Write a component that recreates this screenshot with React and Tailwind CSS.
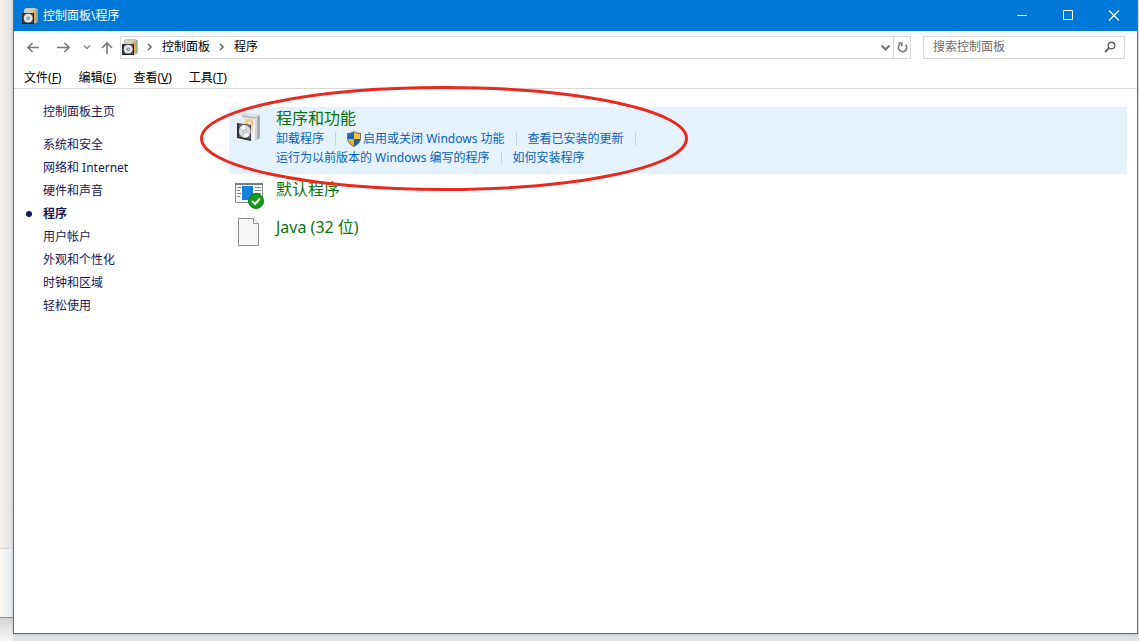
import React from 'react';

const sidebarItems = [
  { label: '系统和安全' },
  { label: '网络和 Internet' },
  { label: '硬件和声音' },
  { label: '程序', active: true },
  { label: '用户帐户' },
  { label: '外观和个性化' },
  { label: '时钟和区域' },
  { label: '轻松使用' }
];

const menuItems = [
  { label: '文件', hotkey: 'F' },
  { label: '编辑', hotkey: 'E' },
  { label: '查看', hotkey: 'V' },
  { label: '工具', hotkey: 'T' }
];

const breadcrumbs = ['控制面板', '程序'];

const ProgramsIcon = ({ className }) => (
  <svg className={className} viewBox="0 0 16 16" aria-hidden="true">
    <path d="M2 1.500 4 0h9l2.500 1v13L13 15.500 2 5z" fill="#c3c6c0" />
    <path d="M3 1h9v4H3z" fill="#d5d1bf" />
    <path d="M10.500 2.500h3V14h-3z" fill="#e3ab45" />
    <path d="M13.500 2 15.500 1v13l-2 1.500z" fill="#9aa5a6" />
    <path d="M0 5h12v11H0z" fill="#222426" />
    <path d="M1.500 5.500H11v9.300H1.500z" fill="#50565b" />
    <circle cx="6.200" cy="10.200" r="4.400" fill="#e4e8eb" />
    <circle cx="6.200" cy="10.200" r="1.800" fill="#718a98" />
    <circle cx="6.200" cy="10.200" r=".7" fill="#fff" />
  </svg>
);

const ProgramsLargeIcon = () => (
  <svg className="w-8 h-8" viewBox="0 0 32 32" aria-hidden="true">
    <path d="m9 4 2-2 16 2v3l-4 2L9 6z" fill="#b9bdc2" />
    <path d="m10 2 17 2-4 2-14-2z" fill="#dfe2e5" />
    <path d="M9 6 22 8v21l-9-2z" fill="#edf0f3" />
    <path d="m22 7 5-2v22l-5 3z" fill="#a9adb3" />
    <path d="m22 7 2-.8V29l-2 1z" fill="#d3d6da" />
    <path d="m11 7 9 2v12l-9-2z" fill="#f1dcb7" />
    <circle cx="16.500" cy="12" r="4" fill="#efc58a" />
    <circle cx="16.500" cy="12" r="1.500" fill="#fff1d8" />
    <path d="m4 12 14 2v16L4 27z" fill="#2d3034" />
    <path d="m6 12.500 11.500 1.800V28L6 25.800z" fill="#626a70" />
    <ellipse cx="11.800" cy="20.200" rx="5.800" ry="6.300" fill="#d4d8db" />
    <path d="m11.800 20.200-4.500-4a5.800 6.300 0 0 1 5-2.200zM11.800 20.200l4.500 4a5.800 6.300 0 0 1-5 2.200z" fill="#fff" />
    <circle cx="11.800" cy="20.200" r="2" fill="#a3adb3" />
    <circle cx="11.800" cy="20.200" r="1" fill="#fff" />
  </svg>
);

const DefaultProgramsIcon = () => (
  <svg className="w-8 h-8" viewBox="0 0 32 32" aria-hidden="true">
    <path d="M2.500 5.500h27v19h-27z" fill="#fafafa" stroke="#85898c" />
    <path d="M2 5h28v2H2z" fill="#777c80" />
    <path d="M4 9.500h4m-4 3h3m-3 3h4m-4 3h3M22 9.500h6m-6 3h6m-6 3h6" stroke="#7c8286" />
    <path d="M9 8h11v14H9z" fill="#1683dc" />
    <circle cx="23" cy="23" r="7.500" fill="#159a17" stroke="#0b7b11" />
    <path d="m19 23 3 3 5-5.500" fill="none" stroke="#fff" strokeWidth="2" />
  </svg>
);

const FileIcon = () => (
  <svg className="w-8 h-8" viewBox="0 0 32 32" aria-hidden="true">
    <path d="M5.500 2.500h15l5 5v22h-20z" fill="#f7f7f7" stroke="#909090" />
    <path d="M20.500 2.500v5h5" fill="#fff" stroke="#909090" />
  </svg>
);

const ShieldIcon = () => (
  <svg className="w-4 h-4" viewBox="0 0 16 16" aria-hidden="true">
    <path d="M7 0c2 1.500 4 2 7 2v5c0 4-3 7-7 9-4-2-7-5-7-9V2c3 0 5-.5 7-2z" fill="#6a6f75" />
    <path d="M7 1.200V8H1V3c2.500-.1 4.300-.7 6-1.800z" fill="#1c68b5" />
    <path d="M7 1.200V8h6V3c-2.500-.1-4.300-.7-6-1.800z" fill="#f8c538" />
    <path d="M1 8h6v6.800C3.500 13.300 1.300 11 1 8z" fill="#f2b41e" />
    <path d="M13 8H7v6.800c3.500-1.500 5.700-3.800 6-6.800z" fill="#1b5fa9" />
  </svg>
);

const ChevronRight = () => (
  <svg className="w-2 h-2" viewBox="0 0 8 8" fill="none" stroke="#666" strokeWidth="1.500" aria-hidden="true">
    <path d="m2 1 3 3-3 3" />
  </svg>
);

const Divider = () => <span className="w-px h-3.5 mx-[11px] bg-[#c5d3df]" />;

const TaskLink = ({ children }) => (
  <a href="#" className="text-[#0a63bd] hover:underline">{children}</a>
);

const TitleBar = () => (
  <header className="flex items-center h-[31px] bg-[#0078d7] text-white">
    <ProgramsIcon className="w-4 h-4 ml-2" />
    <h1 className="ml-[5px] flex-1">控制面板\程序</h1>
    <button aria-label="最小化" className="flex justify-center w-[46px]">
      <svg className="w-3 h-3" viewBox="0 0 12 12" stroke="#fff"><path d="M1 5.500h10" /></svg>
    </button>
    <button aria-label="最大化" className="flex justify-center w-[46px]">
      <svg className="w-3 h-3" viewBox="0 0 12 12" fill="none" stroke="#fff"><path d="M1.500 .5h9v9h-9z" /></svg>
    </button>
    <button aria-label="关闭" className="flex justify-center w-[46px]">
      <svg className="w-3 h-3" viewBox="0 0 12 12" stroke="#fff" strokeWidth="1.200"><path d="m1 .5 10 10M11 .5l-10 10" /></svg>
    </button>
  </header>
);

const AddressBar = () => (
  <div className="flex items-center h-8 px-3">
    <nav aria-label="导航" className="flex items-center">
      <button aria-label="后退" className="w-4">
        <svg className="w-4 h-4" viewBox="0 0 16 16" fill="none" stroke="#777" strokeWidth="1.600"><path d="M13 8.500H2M6.500 4 2 8.500 6.500 13" /></svg>
      </button>
      <button aria-label="前进" className="w-4 ml-[13px]">
        <svg className="w-4 h-4" viewBox="0 0 16 16" fill="none" stroke="#777" strokeWidth="1.600"><path d="M2 8.500h12M9.500 4 14 8.500 9.500 13" /></svg>
      </button>
      <button aria-label="最近位置" className="w-2 ml-3">
        <svg className="w-2 h-2" viewBox="0 0 8 8" fill="none" stroke="#888" strokeWidth="1.500"><path d="m1 2.500 3 3 3-3" /></svg>
      </button>
      <button aria-label="上移" className="w-4 ml-2">
        <svg className="w-4 h-4" viewBox="0 0 16 16" fill="none" stroke="#777" strokeWidth="1.600"><path d="M8 15V4M3 9l5-5 5 5" /></svg>
      </button>
    </nav>
    <div className="flex items-center flex-1 h-[23px] ml-[5px] border border-[#d9d9d9]">
      <ProgramsIcon className="w-4 h-4 ml-px" />
      {breadcrumbs.map((crumb) => (
        <React.Fragment key={crumb}>
          <span className="mx-2"><ChevronRight /></span>
          <a href="#" className="text-black">{crumb}</a>
        </React.Fragment>
      ))}
      <button aria-label="历史记录" className="flex items-center justify-center w-4 h-full ml-auto">
        <svg className="w-2.5 h-2.5" viewBox="0 0 10 10" fill="none" stroke="#777" strokeWidth="2"><path d="m1.500 3.500 4 4 4-4" /></svg>
      </button>
      <button aria-label="刷新" className="flex items-center justify-center w-[17px] h-full border-l border-[#d9d9d9]">
        <svg className="w-3 h-3" viewBox="0 0 12 12" fill="none" stroke="#777" strokeWidth="1.600"><path d="M9.500 3.500a4.200 4.200 0 1 1-5.500-.3M2.500 2h3.300v3.300" /></svg>
      </button>
    </div>
    <label className="flex items-center w-[202px] h-[23px] ml-3 pl-[9px] pr-2 border border-[#d9d9d9]">
      <input type="text" aria-label="搜索控制面板" placeholder="搜索控制面板" className="flex-1 min-w-0 outline-none placeholder:text-[#6d6d6d]" />
      <svg className="w-3 h-3" viewBox="0 0 12 12" fill="none" stroke="#666" strokeWidth="1.500" aria-hidden="true">
        <circle cx="7.500" cy="4.500" r="3.300" />
        <path d="M5 7 1 11" strokeWidth="2" />
      </svg>
    </label>
  </div>
);

const MenuBar = () => (
  <nav aria-label="菜单" className="flex items-end gap-[17px] h-[26px] pl-2.5 pb-0.5 border-b border-[#d9d9d9]">
    {menuItems.map((item) => (
      <button key={item.hotkey} className="text-black">
        {item.label}(<span className="underline">{item.hotkey}</span>)
      </button>
    ))}
  </nav>
);

const Sidebar = () => (
  <aside className="w-[215px] shrink-0 pt-[11px] pl-[11px] text-[#171757]">
    <a href="#" className="block leading-[23px] pl-[18px] mb-2.5">控制面板主页</a>
    <ul>
      {sidebarItems.map((item) => (
        <li key={item.label} className="flex items-center h-[23px]">
          <span className="w-[18px] pl-px">
            {item.active && <span className="block w-1.5 h-1.5 rounded-full bg-[#171757]" />}
          </span>
          <a href="#" className={item.active ? 'font-bold' : ''}>{item.label}</a>
        </li>
      ))}
    </ul>
  </aside>
);

const Category = ({ icon, title, children, className = '' }) => (
  <section className={`flex pl-1 ${className}`}>
    <div className="w-8 shrink-0">{icon}</div>
    <div className="ml-[11px]">
      <h2 className="text-[16px] leading-[22px] text-[#0a750e]">
        <a href="#">{title}</a>
      </h2>
      {children}
    </div>
  </section>
);

// Hand-drawn style marker around the first category
const Highlight = () => (
  <svg className="absolute -left-[30px] -top-[22px] w-[490px] h-[106px] pointer-events-none" viewBox="0 0 490 106" fill="none" aria-hidden="true">
    <ellipse cx="245" cy="53.500" rx="242.500" ry="51" stroke="#e9291d" strokeWidth="3" />
  </svg>
);

// Edge of the window that sits behind this one
const Backdrop = () => (
  <div className="flex flex-col w-[13px] shrink-0" aria-hidden="true">
    <div className="flex-1 bg-linear-to-r from-[#f8f1eb] to-[#dcdfe2]" />
    <div className="h-[70px] bg-linear-to-r from-[#fdf8f1] to-[#dfe8f0] border-t border-b border-t-[#d5d5d5] border-b-[#8e8e8e]" />
    <div className="h-[23px] bg-linear-to-b from-[#d4d4d4] to-[#f6f6f6]" />
  </div>
);

const App = () => {
  return (
    <div className="flex h-screen overflow-hidden bg-[#dfe1e4] font-['Noto_Sans','Noto_Sans_CJK_SC',sans-serif] text-[12px] leading-4">
      <Backdrop />
      <div className="flex flex-col flex-1 mr-px mb-[7px] bg-white border border-t-0 border-[#1c80c8] shadow-sm">
        <TitleBar />
        <AddressBar />
        <MenuBar />
        <div className="flex flex-1 min-h-0">
          <Sidebar />
          <main className="flex-1 pt-[18px] pr-2.5">
            <div className="relative">
              <Category title="程序和功能" icon={<div className="pt-1"><ProgramsLargeIcon /></div>} className="h-[67px] bg-[#e5f2fc]">
                <div className="flex items-center h-[19px]">
                  <TaskLink>卸载程序</TaskLink>
                  <Divider />
                  <ShieldIcon />
                  <TaskLink>启用或关闭 Windows 功能</TaskLink>
                  <Divider />
                  <TaskLink>查看已安装的更新</TaskLink>
                  <Divider />
                </div>
                <div className="flex items-center h-[19px]">
                  <TaskLink>运行为以前版本的 Windows 编写的程序</TaskLink>
                  <Divider />
                  <TaskLink>如何安装程序</TaskLink>
                </div>
              </Category>
              <Highlight />
            </div>
            <Category title="默认程序" icon={<DefaultProgramsIcon />} className="h-[38px] mt-1" />
            <Category title="Java (32 位)" icon={<FileIcon />} className="h-[38px]" />
          </main>
        </div>
      </div>
    </div>
  );
};

export default App;
